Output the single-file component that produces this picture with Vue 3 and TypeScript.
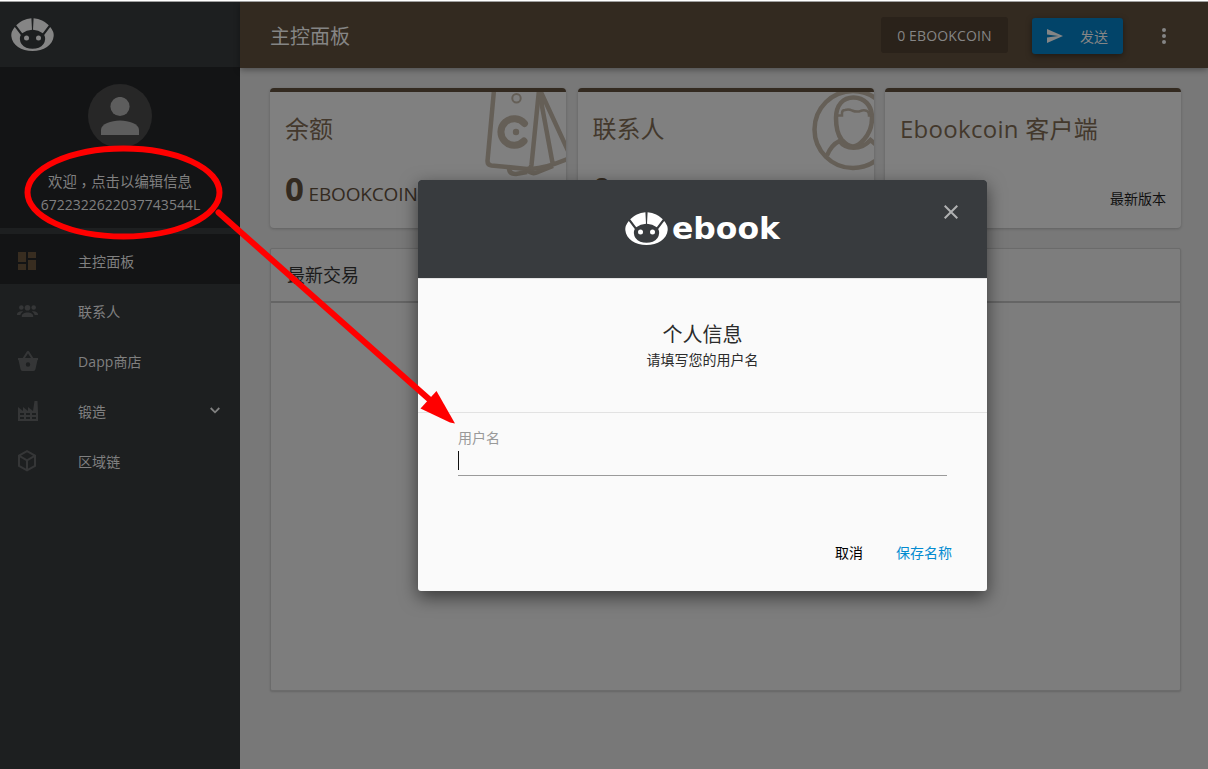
<script setup lang="ts">
interface NavItem {
  label: string
  icon: string
  active?: boolean
  expandable?: boolean
}

const navItems: NavItem[] = [
  { label: '主控面板', icon: 'dashboard', active: true },
  { label: '联系人', icon: 'people' },
  { label: 'Dapp商店', icon: 'basket' },
  { label: '锻造', icon: 'factory', expandable: true },
  { label: '区域链', icon: 'cube' },
]
</script>

<template>
  <div class="app">
    <div class="topline"></div>
    <aside class="sidebar">
      <div class="brand">
        <svg class="mascot" viewBox="0 0 43 33">
          <use href="#mascot-shape" />
        </svg>
      </div>
      <div class="profile">
        <div class="avatar">
          <svg viewBox="0 0 38 38">
            <circle cx="19" cy="9.5" r="9.6" />
            <path d="M0 38v-5c0-6 10-9.500 19-9.500s19 3.500 19 9.500v5z" />
          </svg>
        </div>
        <div class="welcome">欢迎<span class="comma">，</span>点击以编辑信息</div>
        <div class="account">6722322622037743544L</div>
      </div>
      <nav class="nav">
        <div v-for="item in navItems" :key="item.icon" class="nav-item" :class="{ active: item.active }">
          <svg class="nav-icon" viewBox="0 0 24 24">
            <path v-if="item.icon === 'dashboard'" d="M3 13h8V3H3zm0 8h8v-6H3zm10 0h8V11h-8zm0-18v6h8V3z" />
            <g v-else-if="item.icon === 'people'">
              <circle cx="6.300" cy="8.500" r="2.300" />
              <circle cx="12.500" cy="8.800" r="2.800" />
              <circle cx="18.700" cy="8.500" r="2.300" />
              <path d="M6.800 18v-.8c0-2.400 2.700-3.600 5.700-3.600s5.700 1.200 5.700 3.600v.8zM2 16v-.7c0-1.800 2-3.100 4.500-3.100.6 0 1.200.1 1.700.2C6.500 13.400 5.600 14.600 5.400 16zM23 16h-3.400c-.2-1.400-1.100-2.600-2.800-3.600.5-.1 1.100-.2 1.700-.2 2.500 0 4.500 1.300 4.500 3.100z" />
            </g>
            <path v-else-if="item.icon === 'basket'" fill-rule="evenodd" d="M3 9h4.700L12 2.200Q13 1.200 14 2.200L18.300 9H23v2h-.5l-2 9q-.3 2-2 2h-11q-1.700 0-2-2l-2-9H3zm7 0h6l-3-4.600zM13 13.300a2.200 2.200 0 1 0 0 4.400 2.200 2.200 0 0 0 0-4.400z" />
            <path v-else-if="item.icon === 'factory'" fill-rule="evenodd" d="M3 22V8l5 4V8l5 4V8l5 4L19.500 2h3L23 13v9zM5 14v2h4v-2zm6 0v2h4v-2zm6 0v2h4v-2zM5 18v2h4v-2zm6 0v2h4v-2zm6 0v2h4v-2z" />
            <path v-else class="line" d="M12 2.200l8 4.400v10.200l-8 4.500-8-4.500V6.600zM4.300 6.900l7.700 4.400 7.700-4.400M12 11.300v9.500" />
          </svg>
          <span class="nav-label">{{ item.label }}</span>
          <svg v-if="item.expandable" class="chevron" viewBox="0 0 10 7">
            <path d="M.7 1l4.300 4.300L9.300 1" />
          </svg>
        </div>
      </nav>
    </aside>

    <main class="main">
      <header class="toolbar">
        <h1>主控面板</h1>
        <div class="balance-chip">0 EBOOKCOIN</div>
        <div class="send">
          <svg viewBox="0 0 16 14"><path d="M0 14L16 7 0 0v5.400L11.400 7 0 8.600z" /></svg>
          <span>发送</span>
        </div>
        <svg class="more" viewBox="0 0 4 16">
          <circle cx="2" cy="2" r="2" /><circle cx="2" cy="8" r="2" /><circle cx="2" cy="14" r="2" />
        </svg>
      </header>

      <section class="cards">
        <article class="card">
          <h2>余额</h2>
          <div class="amount"><b>0</b> EBOOKCOIN</div>
          <svg class="card-art" viewBox="0 0 84 88">
            <g class="thick">
              <path d="M12 -2L5.500 69q0 4 4 4.500L45 77q4 0 4.500-4L57-2" />
              <path d="M57-2L71 73.500M58-2L88 63M49 77Q65 76 88 66" />
              <path d="M27 76q0 6 7 6l11-2M45 78q5 5 11 2l15-6" />
            </g>
            <circle class="ring" cx="34.500" cy="6.300" r="4.200" />
            <path class="coin" d="M42.500 31.500a13.300 13.300 0 1 0-.5 17.500" />
            <circle class="dot" cx="34" cy="40" r="3.200" />
          </svg>
        </article>
        <article class="card">
          <h2>联系人</h2>
          <div class="amount"><b>0</b></div>
          <svg class="card-art" viewBox="0 0 84 88">
            <g class="thick">
              <circle cx="63" cy="37.500" r="38.500" />
              <path d="M46 26c0-13 7-20.500 17.500-20.500S82 13 82 26c0 10-4 17-8 21.500-5 5.500-8 7-11 7s-7-2-11.500-7C48 43 46 36 46 26z" />
              <path d="M37 63.500c2-5 5-11 12.500-14.500 6 8.500 21 10 31-1L90 56" />
            </g>
            <path class="hair" d="M47 23.500h5V21q0-3 3-3 4-1 7 .5 5 2 9 .3 3-1 6 .2 2 1 2 4.500h4" />
          </svg>
        </article>
        <article class="card">
          <h2 class="spaced">Ebookcoin 客户端</h2>
          <div class="version">最新版本</div>
        </article>
      </section>

      <section class="panel">
        <h3>最新交易</h3>
      </section>
    </main>

    <div class="dialog">
      <div class="dialog-head">
        <svg class="logo" viewBox="0 0 156 34">
          <defs>
            <g id="mascot-shape">
              <path d="M20.400.2L21 11.700Q15.500 12 11.200 15.300L5.200 7.200Q11 1 20.400.2zM22.600.2Q32 1 37.800 7.200L31.800 15.300Q27.500 12 22 11.700z" />
              <path fill-rule="evenodd" d="M3.800 9L9.800 17Q7.500 21 10.500 26c2.500 3.500 6.500 4.800 11 4.800s8.500-1.300 11-4.800q3-5 .7-9L39.200 9q3.800 4.500 3.500 9C42 27 32.500 33 21.500 33S1 27 .3 18Q0 13.500 3.800 9z" />
              <circle cx="15.500" cy="20" r="2.500" /><circle cx="27.500" cy="20" r="2.500" />
            </g>
          </defs>
          <use href="#mascot-shape" />
          <text x="47" y="27" textLength="108" lengthAdjust="spacingAndGlyphs">ebook</text>
        </svg>
        <svg class="close" viewBox="0 0 14 14"><path d="M.7.700l12.600 12.600M13.300.700L.7 13.300" /></svg>
      </div>
      <div class="dialog-intro">
        <h4>个人信息</h4>
        <p>请填写您的用户名</p>
      </div>
      <div class="dialog-form">
        <label>用户名</label>
        <div class="field"><span class="caret"></span></div>
        <div class="actions">
          <span>取消</span>
          <span class="primary">保存名称</span>
        </div>
      </div>
    </div>

    <svg class="annotation" viewBox="0 0 1208 769">
      <ellipse cx="123.500" cy="192.500" rx="96" ry="44" />
      <path class="shaft" d="M218.500 212.500L430 400" />
      <path class="tip" d="M436.500 391L420.500 408.500 450 422.500 455 423.500z" />
    </svg>
  </div>
</template>

<style>
body {
  margin: 0;
  overflow: hidden;
}
</style>

<style scoped>
.app {
  position: relative;
  display: flex;
  width: 1208px;
  height: 769px;
  box-sizing: border-box;
  padding-top: 2px;
  background: #787878;
  font-family: "Open Sans", "Noto Sans CJK SC", sans-serif;
  font-size: 14px;
  overflow: hidden;
}
.topline {
  position: absolute;
  inset: 0 0 auto 0;
  height: 2px;
  box-sizing: border-box;
  background: #fff;
  border-bottom: 1px solid #a0a0a0;
}
h1, h2, h3, h4, p {
  margin: 0;
  font-weight: 400;
}
svg {
  display: block;
}
.sidebar {
  width: 240px;
  flex: none;
  background: #1d1f20;
  color: #808080;
}
.brand {
  height: 65px;
  box-sizing: border-box;
  padding: 16px 0 0 11px;
}
.mascot {
  width: 43px;
  height: 33px;
  fill: #858585;
}
.profile {
  height: 161px;
  box-sizing: border-box;
  padding-top: 17px;
  background: #131415;
  text-align: center;
}
.avatar {
  width: 64px;
  height: 64px;
  margin: 0 auto 21px;
  border-radius: 50%;
  background: #272727;
  display: flex;
  justify-content: center;
}
.avatar svg {
  width: 38px;
  height: 38px;
  margin-top: 13px;
  fill: #5d5d5d;
}
.welcome {
  height: 24px;
  line-height: 25px;
  font-size: 14.400px;
}
.comma {
  display: inline-block;
  font-family: "Noto Sans CJK TC", sans-serif;
  line-height: 1;
  transform: translateY(4px);
}
.account {
  line-height: 24px;
  padding-left: 1px;
}
.nav {
  padding-top: 6px;
}
.nav-item {
  height: 50px;
  display: flex;
  align-items: center;
}
.nav-item.active {
  background: #131415;
}
.nav-icon {
  width: 24px;
  height: 24px;
  margin: 4px 39px 0 15px;
  fill: #353637;
}
.active .nav-icon {
  fill: #382d20;
}
.nav-icon .line {
  fill: none;
  stroke: #353637;
  stroke-width: 2;
}
.nav-label {
  flex: 1;
  padding-top: 4px;
  letter-spacing: .1px;
}
.chevron {
  width: 10px;
  height: 7px;
  margin: 3px 20px 0 0;
  fill: none;
  stroke: #808080;
  stroke-width: 1.800;
}
.main {
  flex: 1;
}
.toolbar {
  height: 66px;
  display: flex;
  align-items: center;
  box-sizing: border-box;
  padding: 0 42px 0 30px;
  background: #332a20;
  color: #858585;
  box-shadow: 0 2px 6px rgba(0, 0, 0, .35);
}
.toolbar h1 {
  flex: 1;
  font-size: 20px;
}
.balance-chip {
  width: 127px;
  height: 36px;
  line-height: 37px;
  text-align: center;
  letter-spacing: .15px;
  border-radius: 3px;
  background: #2a221a;
}
.send {
  width: 91px;
  height: 36px;
  margin: 2px 39px 0 24px;
  display: flex;
  align-items: center;
  box-sizing: border-box;
  padding: 0 15px;
  justify-content: space-between;
  border-radius: 3px;
  background: #024469;
  box-shadow: 0 2px 6px rgba(0, 0, 0, .4);
}
.send svg {
  width: 16px;
  height: 14px;
  fill: #858585;
}
.more {
  width: 4px;
  height: 16px;
  margin-top: 1px;
  fill: #858585;
}
.cards {
  display: grid;
  grid-template-columns: repeat(3, 1fr);
  gap: 11.500px;
  padding: 20px 27px 0 30px;
}
.card {
  position: relative;
  height: 140px;
  box-sizing: border-box;
  padding: 19px 15px 0;
  border-top: 4px solid #332a20;
  border-radius: 4px;
  background: #808080;
  color: #332a20;
  box-shadow: 0 1px 3px rgba(0, 0, 0, .2);
  overflow: hidden;
}
.card h2 {
  line-height: 36px;
  font-size: 24px;
  color: #43382c;
}
.card .spaced {
  letter-spacing: .28px;
}
.amount {
  margin-top: 20px;
  font-size: 19px;
  line-height: 44px;
  letter-spacing: -.15px;
}
.amount b {
  font-size: 33px;
}
.version {
  margin-top: 40px;
  line-height: 24px;
  text-align: right;
  color: #111;
}
.card-art {
  position: absolute;
  right: 0;
  top: 0;
  width: 84px;
  height: 88px;
  fill: none;
  stroke: #655f57;
}
.thick {
  stroke-width: 4.500;
}
.ring {
  stroke-width: 2;
}
.coin {
  stroke-width: 7;
  stroke-linecap: round;
}
.dot {
  fill: #655f57;
  stroke: none;
}
.hair {
  stroke-width: 2.500;
}
.panel {
  height: 443px;
  margin: 20px 27px 0 30px;
  box-sizing: border-box;
  border: 1px solid #6b6b6b;
  border-radius: 2px;
  background: #7d7d7d;
  box-shadow: 0 1px 2px rgba(0, 0, 0, .15);
}
.panel h3 {
  height: 54px;
  box-sizing: border-box;
  line-height: 53px;
  padding-left: 16px;
  font-size: 18px;
  border-bottom: 2px solid #656565;
  color: #1b1b1b;
}
.dialog {
  position: absolute;
  left: 418px;
  top: 180px;
  width: 569px;
  height: 411px;
  border-radius: 3px;
  background: #fafafa;
  color: #2b2b2b;
  box-shadow: 0 6px 18px rgba(0, 0, 0, .55);
}
.dialog-head {
  display: flex;
  align-items: flex-start;
  height: 98px;
  border-radius: 3px 3px 0 0;
  background: #383b3e;
}
.logo {
  width: 156px;
  height: 34px;
  margin: 32px 163px 0 207px;
  fill: #fff;
  overflow: visible;
}
.logo text {
  font: 700 31px "DejaVu Sans", sans-serif;
}
.close {
  width: 14px;
  height: 14px;
  margin-top: 25px;
  stroke: #b0b1b2;
  stroke-width: 2;
}
.dialog-intro {
  height: 135px;
  box-sizing: border-box;
  padding-top: 42px;
  border-top: 1px solid #e4e4e4;
  border-bottom: 1px solid #e2e2e2;
  text-align: center;
}
.dialog-intro h4 {
  font-size: 20px;
  line-height: 28px;
}
.dialog-intro p {
  line-height: 22px;
}
.dialog-form {
  padding: 14px 35px 0 40px;
}
.dialog-form label {
  display: block;
  line-height: 22px;
  color: #999;
}
.field {
  height: 27px;
  width: 489px;
  box-sizing: border-box;
  border-bottom: 1px solid #9a9a9a;
  padding-top: 2px;
}
.caret {
  display: block;
  width: 1px;
  height: 19px;
  background: #111;
}
.actions {
  display: flex;
  justify-content: flex-end;
  gap: 33px;
  margin-top: 65px;
  line-height: 24px;
  color: #000;
}
.primary {
  color: #038bd0;
}
.annotation {
  position: absolute;
  inset: 0;
  width: 1208px;
  height: 769px;
  fill: none;
  stroke: #f00;
  stroke-width: 6;
}
.shaft {
  stroke-linecap: round;
}
.tip {
  fill: #f00;
  stroke: none;
}
</style>
